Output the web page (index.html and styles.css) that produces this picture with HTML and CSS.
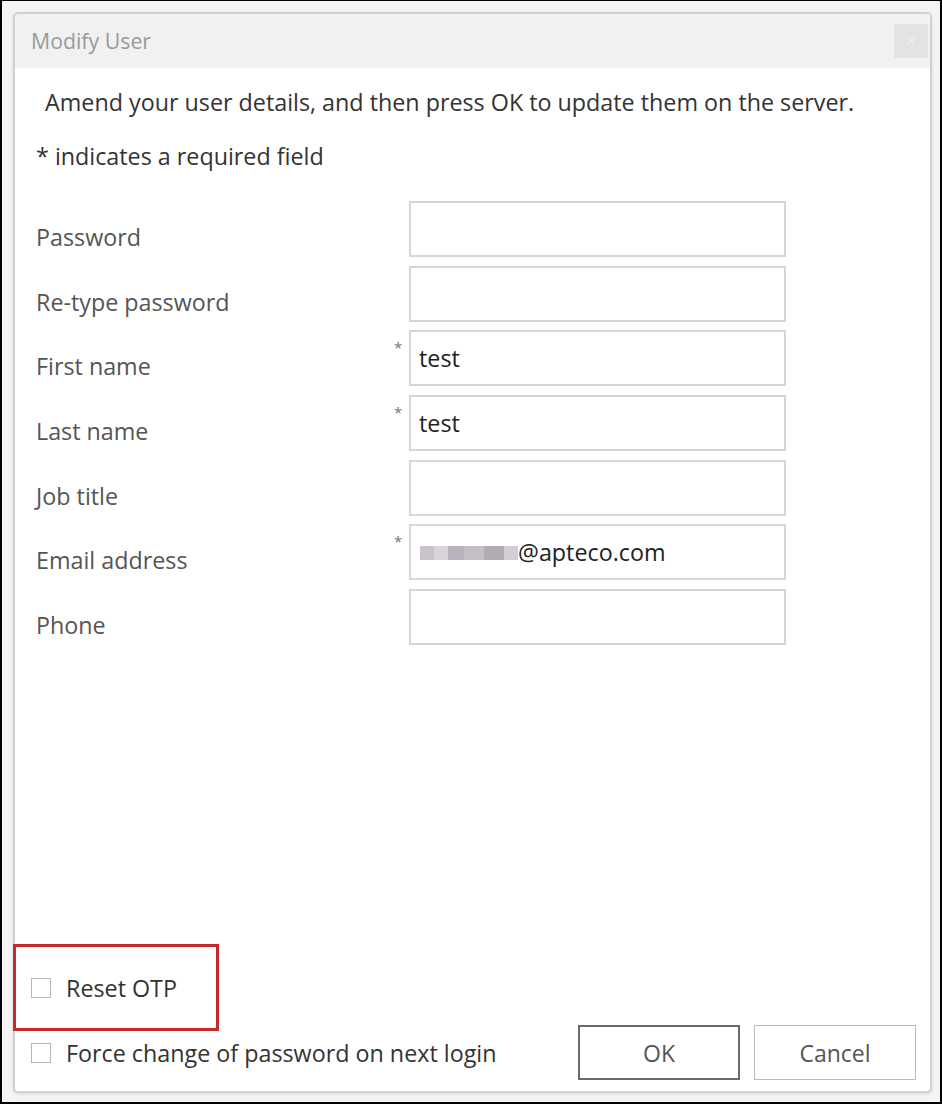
FILE: index.html
```html
<!DOCTYPE html>
<html>
<head>
<meta charset="utf-8">
<link rel="stylesheet" href="styles.css">
</head>
<body>
<div class="frame">
  <div class="dialog">
    <div class="titlebar">
      <span class="title">Modify User</span>
      <span class="close">&#215;</span>
    </div>
    <div class="body">
      <p class="intro">Amend your user details, and then press OK to update them on the server.</p>
      <p class="req">* indicates a required field</p>
      <div class="form">
        <div class="row"><label class="lbl">Password</label><span class="star"></span><div class="input"></div></div>
        <div class="row"><label class="lbl">Re-type password</label><span class="star"></span><div class="input"></div></div>
        <div class="row"><label class="lbl">First name</label><span class="star">*</span><div class="input">test</div></div>
        <div class="row"><label class="lbl">Last name</label><span class="star">*</span><div class="input">test</div></div>
        <div class="row"><label class="lbl">Job title</label><span class="star"></span><div class="input"></div></div>
        <div class="row"><label class="lbl">Email address</label><span class="star">*</span><div class="input"><span class="blur"><i class="b1"></i><i class="b2"></i><i class="b3"></i><i class="b4"></i><i class="b5"></i><i class="b6"></i></span>@apteco.com</div></div>
        <div class="row"><label class="lbl">Phone</label><span class="star"></span><div class="input"></div></div>
      </div>
      <div class="spacer"></div>
      <div class="bottom">
        <div class="checks">
          <div class="highlight">
            <label class="check"><span class="box"></span>Reset OTP</label>
          </div>
          <label class="check force"><span class="box"></span>Force change of password on next login</label>
        </div>
        <div class="buttons">
          <button class="btn ok">OK</button>
          <button class="btn">Cancel</button>
        </div>
      </div>
    </div>
  </div>
</div>
</body>
</html>
```
FILE: styles.css
```css
html, body {
  margin: 0;
  padding: 0;
}
body {
  font-family: "Open Sans", "Noto Sans", sans-serif;
  color: #333;
}
.frame {
  width: 942px;
  height: 1104px;
  box-sizing: border-box;
  border: 2px solid #000;
  border-top-width: 1px;
  background: #f4f4f4;
  padding: 11px 8px 9px 11px;
  display: flex;
}
.dialog {
  flex: 1;
  display: flex;
  flex-direction: column;
  background: #fff;
  border: 2px solid #d2d2d2;
  border-radius: 5px;
  box-shadow: 0 1px 3px rgba(0,0,0,0.12);
}
.titlebar {
  height: 54px;
  background: #f1f1f1;
  display: flex;
  align-items: center;
  justify-content: space-between;
  padding: 0 2px 1px 16px;
  box-sizing: border-box;
  flex: none;
  border-radius: 4px 4px 0 0;
}
.title {
  font-size: 21.3px;
  color: #9a9a9a;
}
.close {
  width: 34px;
  height: 34px;
  background: #e3e3e3;
  color: #f4f4f4;
  font-size: 14px;
  display: flex;
  align-items: center;
  justify-content: center;
}
.body {
  flex: 1;
  display: flex;
  flex-direction: column;
  padding: 0 14px 10px 16px;
}
.intro {
  margin: 19px 0 0 14px;
  font-size: 23.3px;
  color: #333;
  line-height: 30px;
}
.req {
  margin: 24px 0 0 5px;
  font-size: 23.3px;
  line-height: 30px;
  color: #333;
}
.form {
  margin-top: 30px;
  margin-left: 5px;
  display: flex;
  flex-direction: column;
  gap: 8.7px;
}
.row {
  display: flex;
  align-items: flex-start;
}
.lbl {
  width: 358px;
  font-size: 23.3px;
  color: #555;
  padding-top: 21px;
  line-height: 30px;
}
.star {
  width: 15px;
  font-size: 15px;
  color: #777;
  line-height: 14px;
  padding-top: 10px;
}
.input {
  height: 56px;
  width: 377px;
  border: 2px solid #d6d6d6;
  font-size: 23.3px;
  color: #222;
  padding: 11px 0 0 8px;
  box-sizing: border-box;
  line-height: 30px;
  display: flex;
  align-items: flex-start;
}
.blur {
  display: inline-flex;
  height: 14px;
  margin-top: 9px;
  margin-left: 1px;
  margin-right: 0;
}
.blur i {
  display: block;
  height: 14px;
}
.b1 { width: 14px; background: #c9c4cc; }
.b2 { width: 14px; background: #d8d4da; }
.b3 { width: 16px; background: #b9b2bd; }
.b4 { width: 20px; background: #c4bfc6; }
.b5 { width: 20px; background: #b1acb4; }
.b6 { width: 14px; background: #d2ced4; }
.spacer { flex: 1; }
.bottom {
  display: flex;
  justify-content: space-between;
  align-items: flex-end;
}
.checks {
  display: flex;
  flex-direction: column;
  margin-left: -18px;
}
.highlight {
  border: 3px solid #c9282d;
  display: flex;
  align-items: center;
  padding-left: 15px;
  box-sizing: border-box;
  width: 206px;
  height: 87px;
}
.check {
  display: flex;
  align-items: center;
  font-size: 23.3px;
  line-height: 30px;
  color: #333;
}
.box {
  width: 18px;
  height: 18px;
  border: 1px solid #b5b5b5;
  margin-right: 15px;
  background: #fff;
  flex: none;
}
.force {
  margin-top: 7px;
  margin-left: 18px;
  margin-bottom: 13px;
}
.buttons {
  display: flex;
  gap: 14px;
  margin-bottom: 1px;
}
.btn {
  width: 162px;
  height: 55px;
  background: #fff;
  border: 1px solid #bbb;
  font-family: "Open Sans", "Noto Sans", sans-serif;
  font-size: 23px;
  color: #555;
}
.btn.ok {
  border: 2px solid #6a6a6a;
}
```
